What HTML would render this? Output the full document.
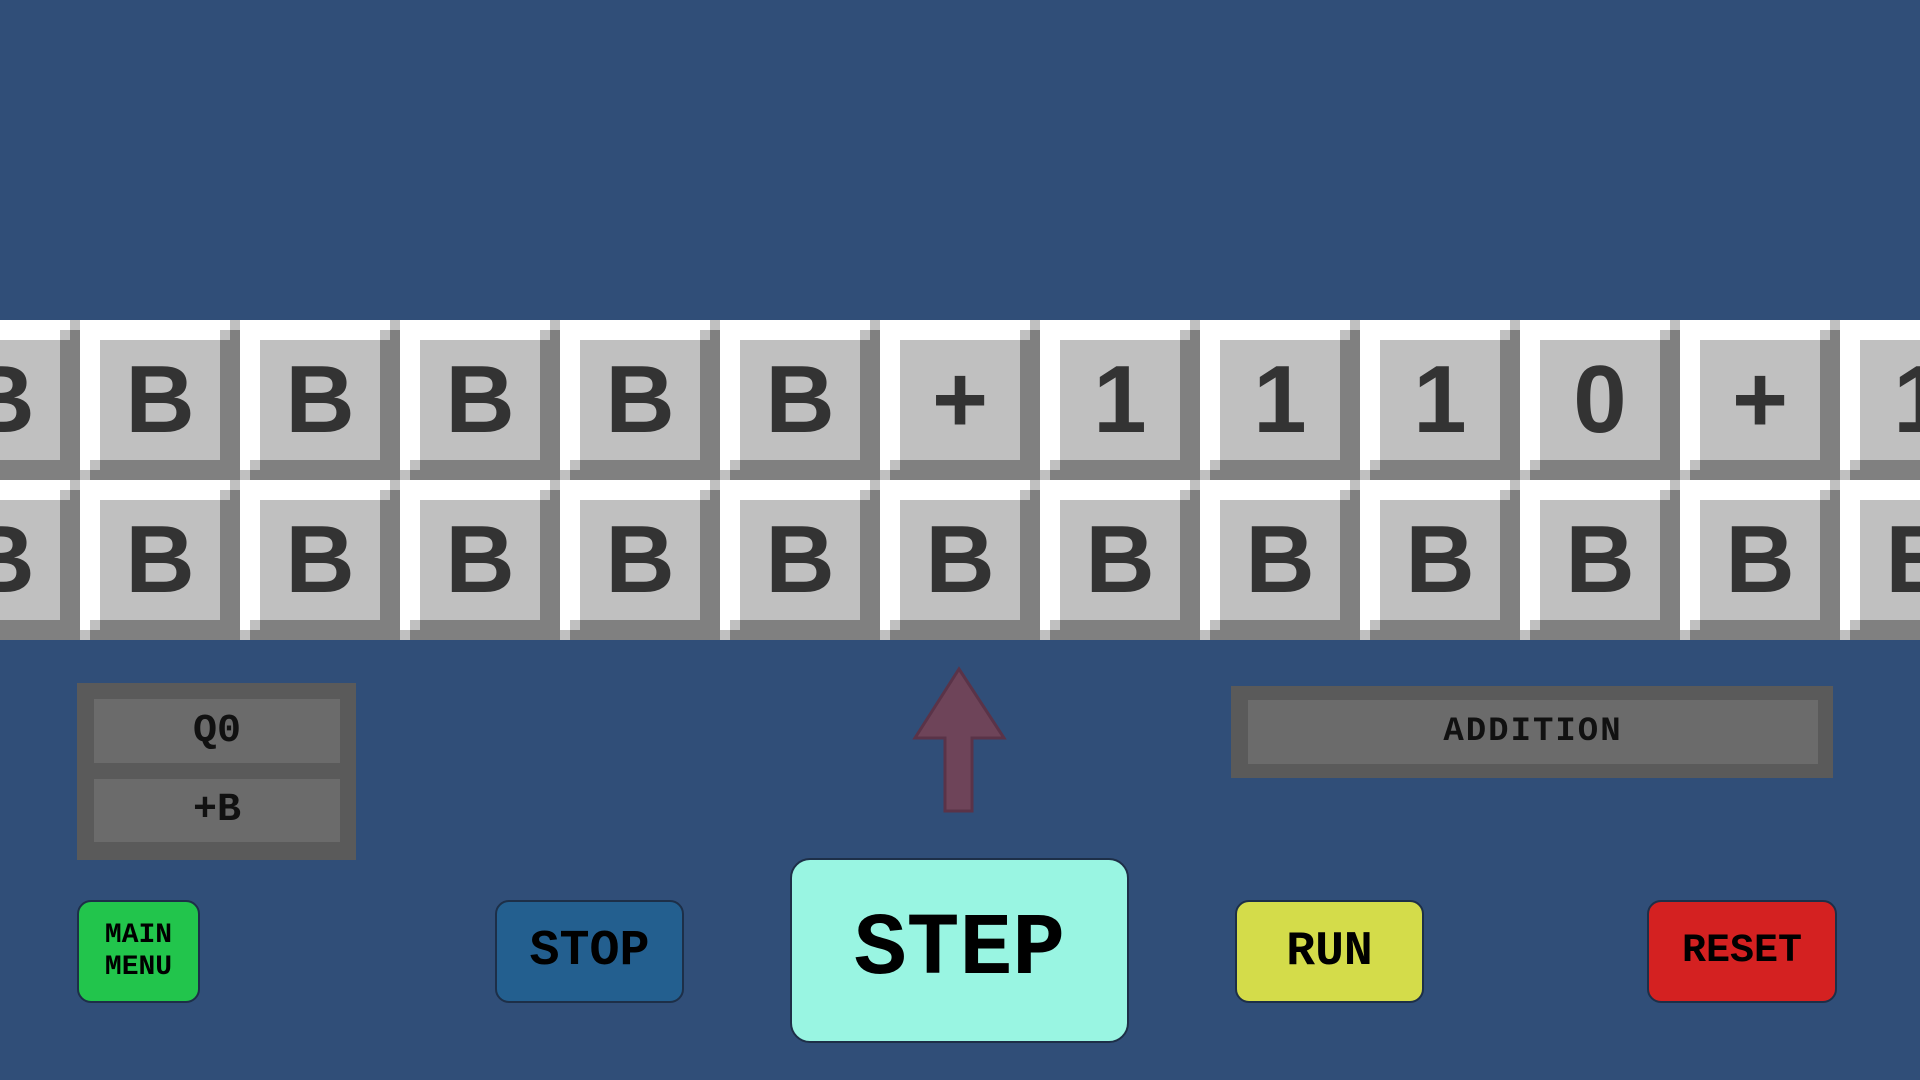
<!DOCTYPE html><html><head><style>
body{margin:0;width:1920px;height:1080px;background:#304e78;overflow:hidden;position:relative;font-family:"Liberation Mono",monospace}
.c{position:absolute;width:160px;height:160px;background:#808080}
.c::before{content:"";position:absolute;left:0;top:0;width:160px;height:160px;background:#fff;clip-path:polygon(0 0,150px 0,150px 10px,140px 10px,140px 20px,20px 20px,20px 140px,10px 140px,10px 150px,0 150px)}
.c::after{content:"";position:absolute;left:150px;top:0;width:10px;height:10px;background:#c0c0c0;box-shadow:-10px 10px 0 #c0c0c0,-150px 150px 0 #c0c0c0,-140px 140px 0 #c0c0c0}
.c span{position:absolute;left:20px;top:20px;width:120px;height:120px;background:#c0c0c0;color:#333;font:bold 96px/120px "Liberation Sans",sans-serif;text-align:center}
.a{position:absolute}
.btn{position:absolute;border-radius:14px;border:2px solid #1d2f48;display:flex;align-items:center;justify-content:center;font-weight:bold;color:#000;box-sizing:border-box;text-align:center}
.box{position:absolute;background:#6b6b6b;display:flex;align-items:center;justify-content:center;font-weight:bold;color:#111}
</style></head><body>
<div class="c" style="left:-80px;top:320px"><span>B</span></div>
<div class="c" style="left:80px;top:320px"><span>B</span></div>
<div class="c" style="left:240px;top:320px"><span>B</span></div>
<div class="c" style="left:400px;top:320px"><span>B</span></div>
<div class="c" style="left:560px;top:320px"><span>B</span></div>
<div class="c" style="left:720px;top:320px"><span>B</span></div>
<div class="c" style="left:880px;top:320px"><span>+</span></div>
<div class="c" style="left:1040px;top:320px"><span>1</span></div>
<div class="c" style="left:1200px;top:320px"><span>1</span></div>
<div class="c" style="left:1360px;top:320px"><span>1</span></div>
<div class="c" style="left:1520px;top:320px"><span>0</span></div>
<div class="c" style="left:1680px;top:320px"><span>+</span></div>
<div class="c" style="left:1840px;top:320px"><span>1</span></div>
<div class="c" style="left:-80px;top:480px"><span>B</span></div>
<div class="c" style="left:80px;top:480px"><span>B</span></div>
<div class="c" style="left:240px;top:480px"><span>B</span></div>
<div class="c" style="left:400px;top:480px"><span>B</span></div>
<div class="c" style="left:560px;top:480px"><span>B</span></div>
<div class="c" style="left:720px;top:480px"><span>B</span></div>
<div class="c" style="left:880px;top:480px"><span>B</span></div>
<div class="c" style="left:1040px;top:480px"><span>B</span></div>
<div class="c" style="left:1200px;top:480px"><span>B</span></div>
<div class="c" style="left:1360px;top:480px"><span>B</span></div>
<div class="c" style="left:1520px;top:480px"><span>B</span></div>
<div class="c" style="left:1680px;top:480px"><span>B</span></div>
<div class="c" style="left:1840px;top:480px"><span>B</span></div>

<div class="a" style="left:77px;top:683px;width:279px;height:177px;background:#5a5a5a"></div>
<div class="box" style="left:94px;top:699px;width:246px;height:64px;font-size:40px">Q0</div>
<div class="box" style="left:94px;top:779px;width:246px;height:63px;font-size:40px">+B</div>

<div class="a" style="left:1231px;top:686px;width:602px;height:92px;background:#5a5a5a"></div>
<div class="box" style="left:1248px;top:700px;width:570px;height:64px;font-size:34px;letter-spacing:2px">ADDITION</div>

<svg class="a" style="left:900px;top:660px" width="120" height="160" viewBox="900 660 120 160">
<polygon points="959,669 1004,738 972,738 972,811 945,811 945,738 915,738" fill="#6e4459" stroke="#5a3348" stroke-width="3"/>
</svg>

<div class="btn" style="left:77px;top:900px;width:123px;height:103px;background:#22c54c;font-size:28px;line-height:32px">MAIN<br>MENU</div>
<div class="btn" style="left:495px;top:900px;width:189px;height:103px;background:#235f8f;font-size:50px">STOP</div>
<div class="btn" style="left:790px;top:858px;width:339px;height:185px;background:#99f5e2;font-size:88px;border-radius:20px">STEP</div>
<div class="btn" style="left:1235px;top:900px;width:189px;height:103px;background:#d4dc4a;font-size:48px">RUN</div>
<div class="btn" style="left:1647px;top:900px;width:190px;height:103px;background:#d42121;font-size:40px">RESET</div>
</body></html>
